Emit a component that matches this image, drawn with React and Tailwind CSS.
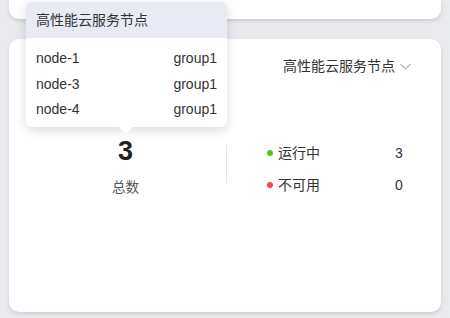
export default function App() {
  const font = { fontFamily: '"Liberation Sans", "Noto Sans CJK SC", sans-serif' };
  return (
    <div className="relative w-[450px] h-[318px] overflow-hidden bg-[#e9eaee] px-[9px]" style={font}>
      <div className="h-[19px] rounded-b-[10px] bg-white shadow-[0_2px_4px_rgba(0,0,0,0.12)]" />
      <div className="mt-[20px] h-[273px] rounded-[10px] bg-white shadow-[0_2px_4px_rgba(0,0,0,0.12)] flex flex-col">
        <div className="flex justify-end items-center pt-[17px] pr-[29px] text-[14px] text-[#333] leading-[20px]">
          <span>高性能云服务节点</span>
          <svg className="ml-[4px]" width="13" height="13" viewBox="0 0 13 13" fill="none" stroke="#b8b8b8" strokeWidth="1.1">
            <path d="M1.5 4 L6.5 9 L11.5 4" />
          </svg>
        </div>
        <div className="flex mt-[60px]">
          <div className="w-[217px] pl-[16px] flex flex-col items-center">
            <div className="text-[27px] font-bold leading-[30px] text-[#222]">3</div>
            <div className="mt-[13px] text-[13.5px] leading-[18px] text-[#555]">总数</div>
          </div>
          <div className="w-px bg-[#e6e6e6] h-[38px] mt-[9px]" />
          <div className="flex flex-col pl-[40px] pt-[7px] w-[180px] text-[14px] text-[#333]">
            <div className="flex items-center h-[20px]">
              <span className="w-[6px] h-[6px] rounded-full bg-[#52c41a] mr-[5px]" />
              <span className="flex-1">运行中</span>
              <span className="w-[12px]">3</span>
            </div>
            <div className="flex items-center h-[20px] mt-[12px]">
              <span className="w-[6px] h-[6px] rounded-full bg-[#f5484d] mr-[5px]" />
              <span className="flex-1">不可用</span>
              <span className="w-[12px]">0</span>
            </div>
          </div>
        </div>
      </div>
      <div className="absolute left-[26px] top-[2px] w-[201px] rounded-[6px] bg-white shadow-[0_3px_12px_rgba(0,0,0,0.15)]">
        <div className="h-[36px] rounded-t-[6px] bg-[#e8eaf4] flex items-center pl-[10px] text-[14px] text-[#333]">高性能云服务节点</div>
        <div className="pt-[8px] pb-[4px] px-[10px] text-[14px] text-[#333]">
          <div className="flex justify-between h-[25.5px] items-center"><span>node-1</span><span>group1</span></div>
          <div className="flex justify-between h-[25.5px] items-center"><span>node-3</span><span>group1</span></div>
          <div className="flex justify-between h-[25.5px] items-center"><span>node-4</span><span>group1</span></div>
        </div>
        <div className="absolute left-[95px] bottom-[-5px] w-[10px] h-[10px] bg-white rotate-45" />
      </div>
    </div>
  );
}
